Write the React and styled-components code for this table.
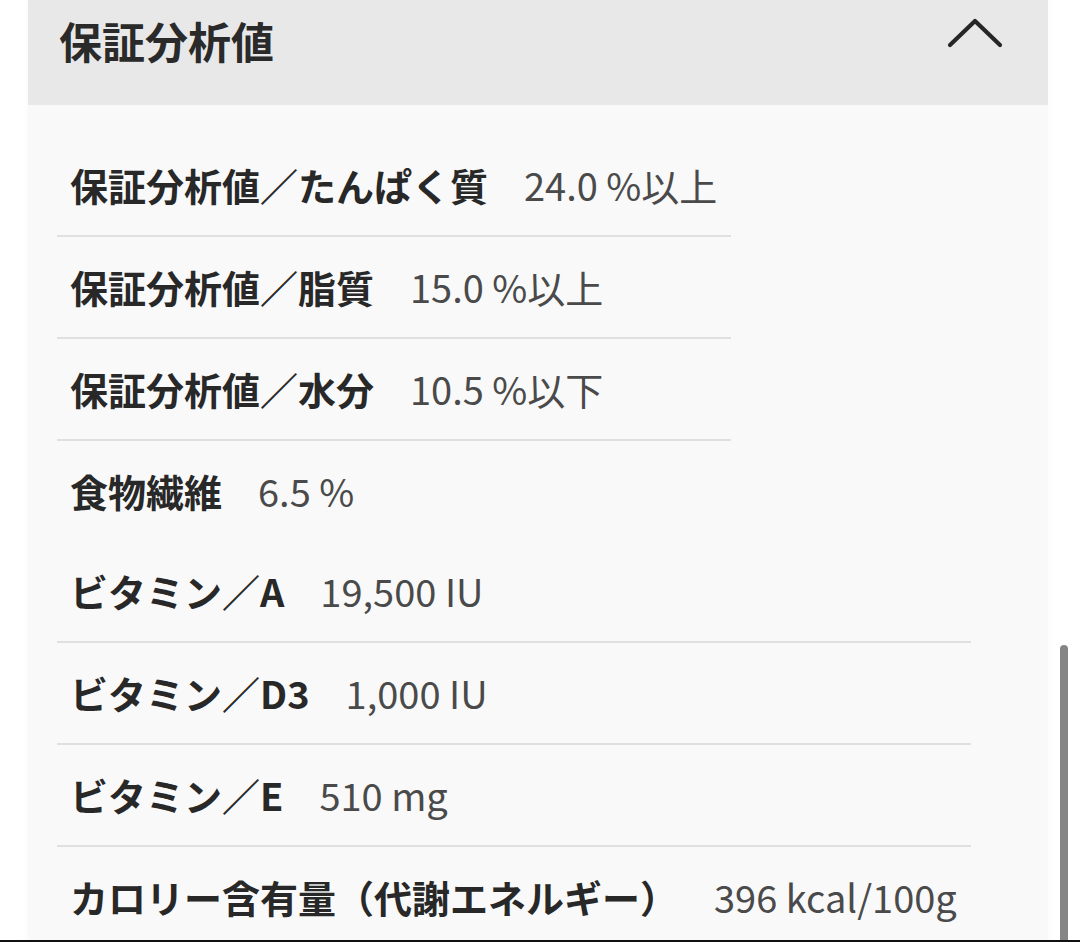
import React from 'react';
import styled, { createGlobalStyle } from 'styled-components';

const GlobalStyle = createGlobalStyle`
  html, body {
    margin: 0;
    padding: 0;
    background: #ffffff;
  }
  body {
    font-family: "Noto Sans CJK JP", "Noto Sans", sans-serif;
  }
`;

const Page = styled.div`
  position: relative;
  box-sizing: border-box;
  height: 942px;
  overflow: hidden;
  padding: 0 32px 0 28px;
  border-bottom: 2px solid #111;
`;

const Panel = styled.section`
  background: #f9f9f9;
  min-height: 100%;
  box-shadow: 0 0 8px rgba(0, 0, 0, 0.03);
`;

const Header = styled.div`
  box-sizing: border-box;
  height: 105px;
  display: flex;
  justify-content: space-between;
  align-items: flex-start;
  padding: 12px 45px 0 31px;
  background: #e8e8e8;
`;

const Title = styled.h2`
  margin: 0;
  font-size: 43px;
  line-height: 56px;
  font-weight: 700;
  color: #2a2a2a;
`;

const Chevron = styled.svg`
  width: 56px;
  height: 32px;
  margin-top: 5px;
`;

const Body = styled.div`
  padding: 30px 0 0 29px;
`;

const Group = styled.dl`
  width: fit-content;
  margin: 0;
`;

const Row = styled.div`
  box-sizing: border-box;
  height: 102px;
  display: flex;
  align-items: center;
  padding: 0 14px 0 13px;
  border-bottom: 2px solid #e0e0e0;

  &:last-child {
    border-bottom: none;
    height: 100px;
  }
`;

const Label = styled.dt`
  font-size: 38px;
  line-height: 1.4;
  font-weight: 700;
  color: #282828;
`;

const Value = styled.dd`
  margin: 0 0 0 36px;
  font-size: 38px;
  line-height: 1.4;
  font-weight: 400;
  color: #4a4a4a;
  white-space: nowrap;
`;

const ScrollThumb = styled.div`
  position: absolute;
  right: 12px;
  top: 645px;
  bottom: 0;
  width: 8px;
  border-radius: 4px 4px 0 0;
  background: #858585;
`;

const groups = [
  [
    ['保証分析値／たんぱく質', '24.0 %以上'],
    ['保証分析値／脂質', '15.0 %以上'],
    ['保証分析値／水分', '10.5 %以下'],
    ['食物繊維', '6.5 %'],
  ],
  [
    ['ビタミン／A', '19,500 IU'],
    ['ビタミン／D3', '1,000 IU'],
    ['ビタミン／E', '510 mg'],
    ['カロリー含有量（代謝エネルギー）', '396 kcal/100g'],
  ],
];

const App = () => {
  return (
    <>
      <GlobalStyle />
      <Page>
        <Panel>
          <Header>
            <Title>保証分析値</Title>
            <Chevron viewBox="0 0 56 32">
              <polyline
                points="3,28 28,4 53,28"
                fill="none"
                stroke="#262626"
                strokeWidth="4.2"
                strokeLinecap="round"
                strokeLinejoin="round"
              />
            </Chevron>
          </Header>
          <Body>
            {groups.map((rows, i) => (
              <Group key={i}>
                {rows.map(([label, value]) => (
                  <Row key={label}>
                    <Label>{label}</Label>
                    <Value>{value}</Value>
                  </Row>
                ))}
              </Group>
            ))}
          </Body>
        </Panel>
        <ScrollThumb />
      </Page>
    </>
  );
};

export default App;
